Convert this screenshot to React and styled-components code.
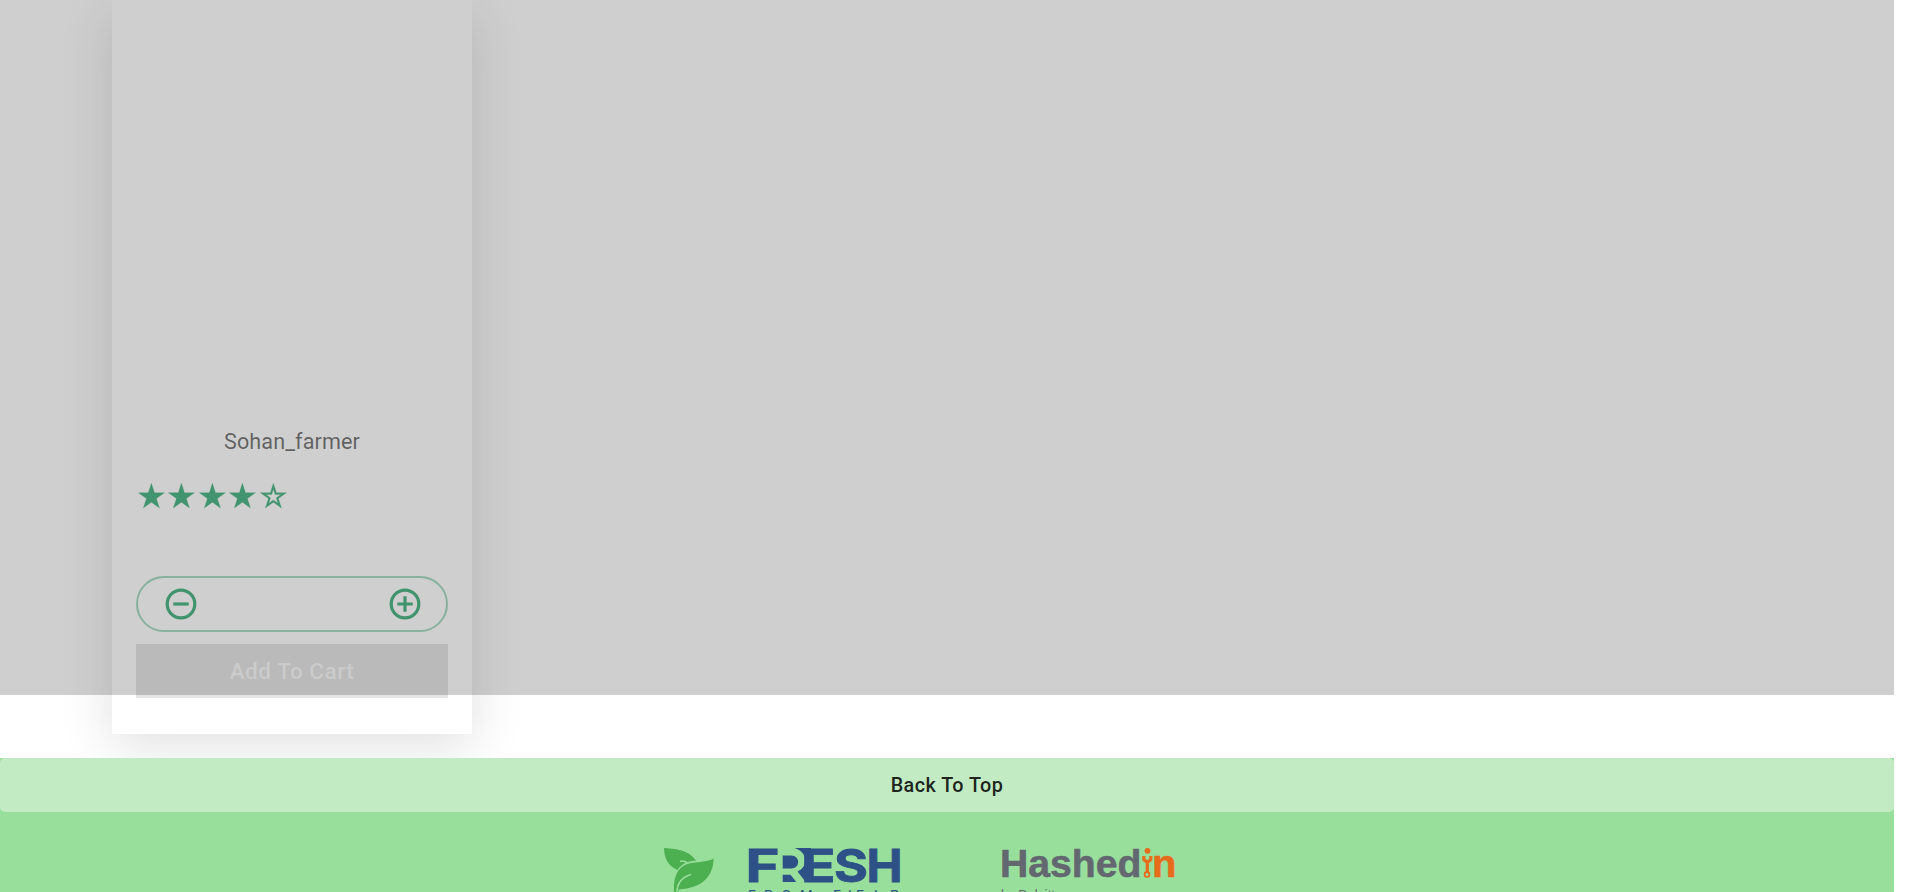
import React from "react";
import styled, { createGlobalStyle } from "styled-components";

const Global = createGlobalStyle`
  *, *::before, *::after { box-sizing: border-box; }
  html, body { margin: 0; height: 100%; overflow: hidden; background: #fff; }
  body { font-family: Roboto, "Liberation Sans", sans-serif; }
`;
const Page = styled.div`
  position: relative;
  width: 1894px;
  height: 892px;
  display: flex;
  flex-direction: column;
  overflow: hidden;
`;
const Products = styled.main`
  height: 758px;
  padding: 0 112px 24px;
  display: flex;
  overflow: hidden;
`;
const Card = styled.article`
  width: 360px;
  padding: 425px 24px 36px;
  display: flex;
  flex-direction: column;
  background: #fff;
  box-shadow: 0 12px 50px rgba(0, 0, 0, 0.125);
`;
const Farmer = styled.p`
  margin: 0;
  height: 34px;
  line-height: 34px;
  text-align: center;
  font-size: 21.6px;
  letter-spacing: 0.1px;
  color: rgba(0, 0, 0, 0.54);
`;
const Rating = styled.div`
  margin-top: 22px;
  height: 30px;
  display: flex;
  color: #52b788;
`;
const StarIcon = styled.svg`
  width: 30.4px;
  height: 32px;
  flex: none;
  fill: currentColor;
`;
const Quantity = styled.div`
  margin-top: 65px;
  height: 56px;
  padding: 0 23.5px 0 24.5px;
  display: flex;
  align-items: center;
  justify-content: space-between;
  border: 2px solid rgba(82, 183, 136, 0.5);
  border-radius: 28px;
  color: #52b788;
`;
const StepIcon = styled.svg`
  width: 36px;
  height: 36px;
  fill: none;
  stroke: currentColor;
  stroke-width: 3.2;
`;
const CartButton = styled.button`
  margin-top: 12px;
  height: 54px;
  padding: 2px 0 0;
  border: 0;
  background: #e5e5e5;
  color: #fafafa;
  font: 500 22.6px/52px Roboto, sans-serif;
  letter-spacing: 0.5px;
`;
const Backdrop = styled.div`
  position: absolute;
  inset: 0 0 auto;
  height: 695px;
  background: rgba(0, 0, 0, 0.19);
`;
const Footer = styled.footer`
  height: 134px;
  background: #99df9c;
`;
const TopButton = styled.button`
  display: block;
  width: 100%;
  height: 54px;
  padding: 2px 0 0;
  border: 0;
  border-radius: 5px;
  background: #c2ebc3;
  color: rgba(0, 0, 0, 0.87);
  font: 500 19.8px/52px Roboto, sans-serif;
  letter-spacing: 0.45px;
`;
const Logos = styled.div`
  padding: 28px 0 0 660px;
  display: flex;
`;
const Logo = styled.svg`
  display: block;
  width: 300px;
  height: 80px;
`;

const STAR = "M0-13.7 3.07-4.23H13.03L4.97 1.62 8.05 11.08 0 5.23-8.05 11.08-4.97 1.62-13.03-4.23H-3.07Z";
const STAR_HOLE = "M0-7.8 1.75-2.41H7.43L2.83.92 4.59 6.32 0 2.98-4.59 6.32-2.83.92-7.43-2.41H-1.75Z";

function Star({ filled }) {
  return (
    <StarIcon viewBox="-15.4 -16 30.4 32">
      <path fillRule="evenodd" d={filled ? STAR : STAR + STAR_HOLE} stroke="currentColor" strokeWidth="0.3" />
    </StarIcon>
  );
}

function Step({ plus }) {
  return (
    <StepIcon viewBox="-18 -18 36 36">
      <circle r="13.8" />
      <path d={plus ? "M-7.7 0H7.7M0-7.7V7.7" : "M-7.7 0H7.7"} />
    </StepIcon>
  );
}

const freshLetters = [
  ["F", 745.4, 34],
  ["E", 801, 34.5],
  ["S", 834, 34],
  ["H", 866.5, 36],
];

export default function App() {
  return (
    <Page>
      <Global />
      <Products>
        <Card>
          <Farmer>Sohan_farmer</Farmer>
          <Rating>
            {[1, 2, 3, 4, 5].map((n) => <Star key={n} filled={n < 5} />)}
          </Rating>
          <Quantity>
            <Step />
            <Step plus />
          </Quantity>
          <CartButton>Add To Cart</CartButton>
        </Card>
      </Products>
      <Footer>
        <TopButton>Back To Top</TopButton>
        <Logos>
          <Logo viewBox="660 840 300 80">
            <g fill="#4caf50">
              <path d="M664 848C674 849 688 849 696 860.5C689 861 682 863 677.5 870C668 866 664 858 664 848Z" />
              <path d="M674 893C673 876 678 866 690 863.3C700 861.5 707 862 713.7 858.5C713 876 703 888 678.5 889.5V893Z" />
            </g>
            <path d="M676.8 893C677 883 682 877 691 874.5M680 861.5C683 860 685 862 687 862.5" fill="none" stroke="#99df9c" strokeWidth="1.6" />
            <g fontFamily="Inter, sans-serif" fontWeight="700" fontSize="45.8" fill="#2d5186" stroke="#2d5186" strokeWidth="0.8">
              {freshLetters.map(([char, x, length]) => (
                <text key={char} x={x} y="881.6" textLength={length} lengthAdjust="spacingAndGlyphs">{char}</text>
              ))}
            </g>
            <g fill="#2d5186">
              <path d="M782.7 855.5H791C800.5 855.5 800.5 868.5 791 868.5H782.7Z" />
              <path d="M782.7 874.7H790.5L796.3 882H782.7Z" />
              <path d="M794.3 848C802 850 806 856 805 862C804.5 867 801 870 797.5 871.5L805.7 882H811V848Z" />
            </g>
            <text x="748 764 781 800 833 848 856 874 890" y="901.2" fontFamily="Inter, sans-serif" fontSize="14" fill="#2d5186">FROMFIELD</text>
          </Logo>
          <Logo viewBox="960 840 300 80">
            <g fontFamily="Liberation Sans, sans-serif" fontWeight="700" fontSize="39.5">
              <text x="1000" y="877" textLength="141.5" lengthAdjust="spacingAndGlyphs" fill="#636770" stroke="#636770" strokeWidth="0.6">Hashed</text>
              <text x="1152" y="877" textLength="24.4" lengthAdjust="spacingAndGlyphs" fill="#e66c1c" stroke="#e66c1c" strokeWidth="0.6">n</text>
            </g>
            <circle cx="1147.5" cy="850.8" r="2.9" fill="#e66c1c" />
            <path d="M1143.8 856V859.5L1147.3 862.5L1150.8 859.5V856M1147.3 862V872" fill="none" stroke="#e66c1c" strokeWidth="3.2" />
            <circle cx="1147" cy="874.4" r="2.4" fill="none" stroke="#e66c1c" strokeWidth="1.8" />
            <text x="1001" y="900" fontFamily="Liberation Sans, sans-serif" fontSize="14.5" textLength="61" lengthAdjust="spacingAndGlyphs" fill="#636770">by Deloitte</text>
          </Logo>
        </Logos>
      </Footer>
      <Backdrop />
    </Page>
  );
}
